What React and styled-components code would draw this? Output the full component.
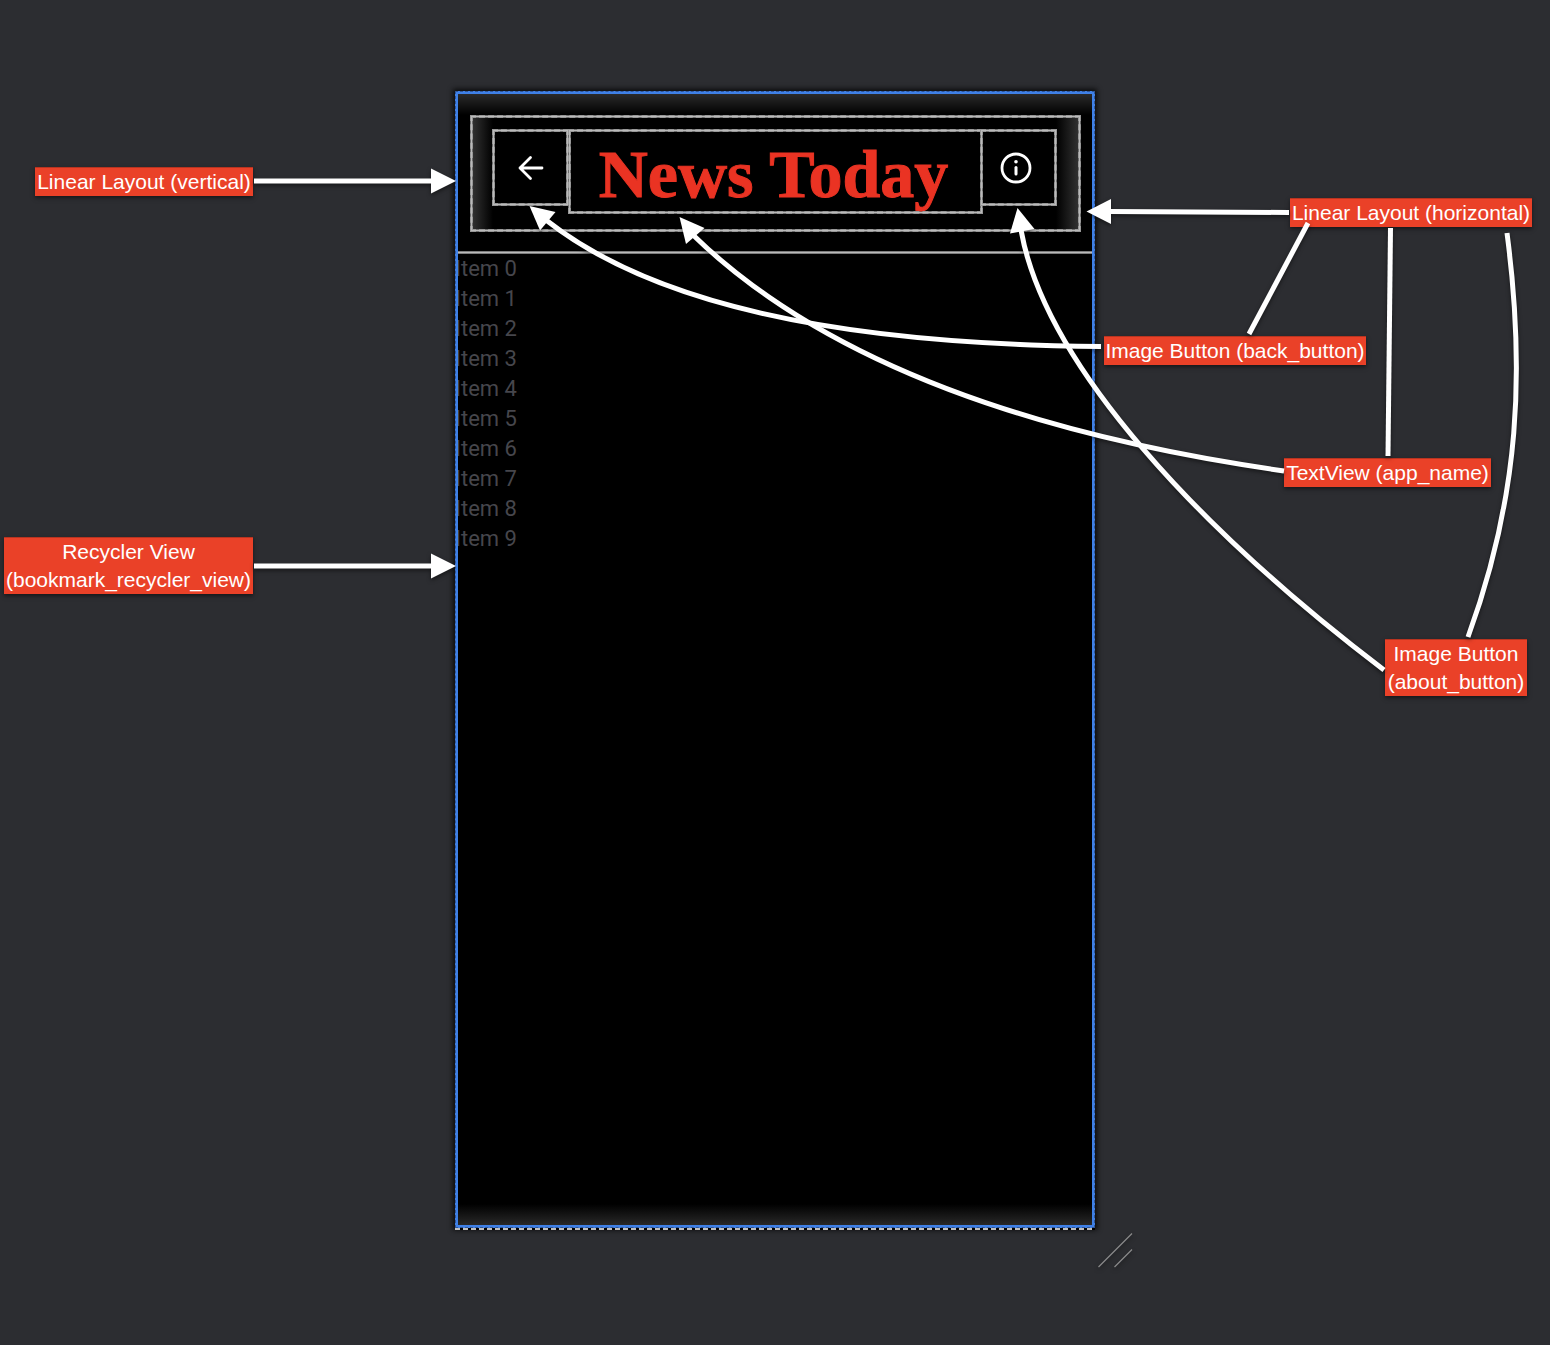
import React from "react";
import styled, { createGlobalStyle } from "styled-components";

const Global = createGlobalStyle`
  * { box-sizing: border-box; }
  body { margin: 0; background: #2c2d31; }
`;

const Canvas = styled.main`
  min-height: 100vh;
  padding: 91px 0 117px;
  overflow: hidden;
  display: flex;
  justify-content: center;
  background: #2c2d31;
`;

const Device = styled.section`
  position: relative;
  width: 640px;
  flex: none;
  display: flex;
  flex-direction: column;
  padding: 3px 0;
  background:
    linear-gradient(#303030, #000) top / 100% 24px no-repeat,
    linear-gradient(#000, #2e2e2e) bottom / 100% 24px no-repeat,
    #000;
  box-shadow: 0 0 5px 2px #0a0a0b;
  &::before {
    content: "";
    position: absolute;
    inset: 0;
    z-index: 1;
    border: 3px solid #3f80e6;
    outline: 1px dashed #2f5596;
    outline-offset: -1px;
    pointer-events: none;
  }
  &::after {
    content: "";
    position: absolute;
    left: 0;
    right: 0;
    bottom: -2px;
    height: 2px;
    background: repeating-linear-gradient(90deg, #c0c0c0 0 5px, #000 5px 8px);
  }
`;

const outline = `
  border: 3px solid #6c6c6c;
  &::before {
    content: "";
    position: absolute;
    inset: -3px;
    border: 3px dashed #989898;
    pointer-events: none;
  }
  &::after {
    content: "";
    position: absolute;
    inset: -2px;
    border: 1px solid #bababa;
    pointer-events: none;
  }
`;

const Header = styled.header`
  position: relative;
  display: flex;
  align-items: flex-start;
  height: 117px;
  margin: 21px 14px 19px 15px;
  padding: 11px 21px 0 19px;
  background:
    linear-gradient(90deg, #303030, #000) left / 20px 100% no-repeat,
    linear-gradient(270deg, #303030, #000) right / 22px 100% no-repeat,
    #000;
  ${outline}
`;

const IconButton = styled.button`
  position: relative;
  width: 77px;
  height: 77px;
  flex: none;
  padding: 0 ${(p) => p.$inset || 0}px 0 0;
  display: grid;
  place-items: center;
  color: #fff;
  background: #000;
  ${outline}
`;

const Title = styled.h1`
  position: relative;
  flex: 1;
  height: 85px;
  margin: 0 -3px 0 -1px;
  padding-right: 4px;
  font: 700 68px/84px "Liberation Serif", serif;
  text-align: center;
  white-space: nowrap;
  color: #ea3323;
  -webkit-text-stroke: 1px #ea3323;
  ${outline}
`;

const List = styled.ul`
  position: relative;
  flex: 1;
  min-height: 974px;
  margin: 0;
  padding: 0;
  list-style: none;
  border-top: 3px solid #7c7c7c;
  &::before {
    content: "";
    position: absolute;
    top: -2px;
    left: 0;
    right: 0;
    border-top: 1px solid #bababa;
  }
`;

const Item = styled.li`
  font: 400 22px/30px Roboto, sans-serif;
  color: #46464c;
`;

const Lines = styled.svg`
  position: absolute;
  left: -455px;
  top: -91px;
  width: 1550px;
  height: 1345px;
  pointer-events: none;
  z-index: 2;
  filter: drop-shadow(0 2px 2px rgba(0, 0, 0, 0.5));
`;

const Label = styled.p`
  position: absolute;
  left: ${(p) => p.$x - 455}px;
  top: ${(p) => p.$y - 91}px;
  width: ${(p) => p.$w}px;
  margin: 0;
  display: flex;
  flex-direction: column;
  align-items: center;
  white-space: nowrap;
  font: 400 21px/28px "Liberation Sans", Arial, sans-serif;
  color: #fff;
  background: #ea4128;
  border-top: 1px solid #b93420;
  box-shadow: 0 2px 4px rgba(0, 0, 0, 0.5);
`;

const labels = [
  { x: 35, y: 167, w: 218, text: ["Linear Layout (vertical)"] },
  { x: 4, y: 537, w: 249, text: ["Recycler View", "(bookmark_recycler_view)"] },
  { x: 1290, y: 198, w: 242, text: ["Linear Layout (horizontal)"] },
  { x: 1104, y: 336, w: 262, text: ["Image Button (back_button)"] },
  { x: 1284, y: 458, w: 207, text: ["TextView (app_name)"] },
  { x: 1385, y: 639, w: 142, text: ["Image Button", "(about_button)"] },
];

const lines = [
  "M254 181H433",
  "M254 566H433",
  "M1289 212.500L1110 211.500",
  "M1308 223L1249 334",
  "M1390.500 228L1388 456",
  "M1507 233C1525 370 1520 495 1468 637",
  "M1101 346.500C830 344 650 302 546 220",
  "M1284 471Q875 413 692 234",
  "M1384 670C1200 530 1045 365 1021 230",
];

const heads = [
  "M456 181L431 168.500V193.500Z",
  "M456 566L431 553.500V578.500Z",
  "M1086.500 211.500L1111 199V224Z",
  "M529.500 206L555.500 212L540 230.500Z",
  "M679.500 217L704.500 228L686 244Z",
  "M1017.500 208L1034.500 229L1010 233.500Z",
];

export default function App() {
  return (
    <>
      <Global />
      <Canvas>
        <Device>
          <Header>
            <IconButton aria-label="Back">
              <svg width="32" height="32" viewBox="0 0 32 32" fill="none" stroke="currentColor" strokeWidth="2.800" strokeLinecap="round" strokeLinejoin="round">
                <path d="M27 16H5M15.500 5.500L5 16L15.500 26.500" />
              </svg>
            </IconButton>
            <Title>News Today</Title>
            <IconButton aria-label="About" $inset={6}>
              <svg width="32" height="32" viewBox="0 0 32 32" fill="none" stroke="currentColor" strokeWidth="2.800">
                <circle cx="16" cy="16" r="14" />
                <path d="M16 15.500V22" strokeWidth="3" strokeLinecap="round" />
                <circle cx="16" cy="9.800" r="1.800" fill="currentColor" stroke="none" />
              </svg>
            </IconButton>
          </Header>
          <List>
            {Array.from({ length: 10 }, (_, i) => (
              <Item key={i}>Item {i}</Item>
            ))}
          </List>
          {labels.map((l) => (
            <Label key={l.x} $x={l.x} $y={l.y} $w={l.w}>
              {l.text.map((t) => (
                <span key={t}>{t}</span>
              ))}
            </Label>
          ))}
          <Lines viewBox="0 0 1550 1345" aria-hidden="true">
            <g fill="none" stroke="#fff" strokeWidth="5">
              {lines.map((d) => <path key={d} d={d} />)}
            </g>
            <g fill="#fff">
              {heads.map((d) => <path key={d} d={d} />)}
            </g>
            <path d="M1098.500 1267L1132 1233.500M1114.500 1267L1132 1249.500" stroke="#8a8a8a" strokeWidth="1.200" />
          </Lines>
        </Device>
      </Canvas>
    </>
  );
}
